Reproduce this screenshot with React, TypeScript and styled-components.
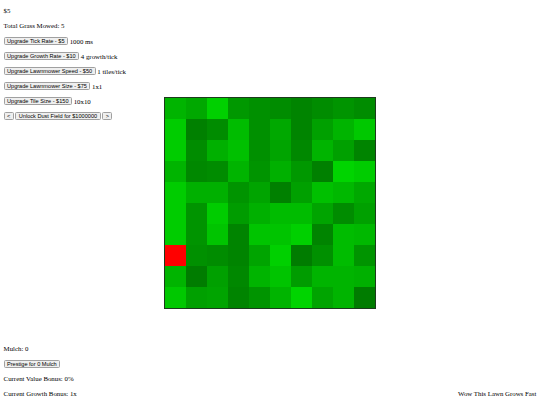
import styled, { createGlobalStyle } from "styled-components";

const GlobalStyle = createGlobalStyle`
    html, body {
        margin: 0;
        padding: 0;
        background: #fff;
    }
    body {
        font-family: "Liberation Serif", "Times New Roman", serif;
        font-size: 6.85px;
        color: #000;
    }
`;

// lawn tile colours, row by row (red = the mower)
const lawn: string[][] = [
    ["#00b400", "#00a800", "#00d000", "#009800", "#009000", "#008c00", "#008400", "#008c00", "#009400", "#008c00"],
    ["#00cc00", "#008000", "#008c00", "#00bc00", "#009000", "#00a800", "#008400", "#00a000", "#00b400", "#00c800"],
    ["#00cc00", "#008c00", "#00b000", "#00c000", "#009000", "#00a400", "#008800", "#00b400", "#00a000", "#008400"],
    ["#00b400", "#008800", "#008c00", "#00b400", "#009400", "#00b000", "#009800", "#008000", "#00d400", "#00cc00"],
    ["#00cc00", "#00b000", "#00b000", "#009400", "#00a400", "#008000", "#00a000", "#00c000", "#00b800", "#00a800"],
    ["#00cc00", "#009400", "#00cc00", "#009c00", "#00b000", "#00bc00", "#00bc00", "#00a400", "#008c00", "#00a000"],
    ["#00cc00", "#009400", "#00c400", "#008400", "#00c400", "#00c400", "#00d000", "#008400", "#00bc00", "#00b800"],
    ["#ff0000", "#009000", "#008c00", "#008400", "#00a400", "#00d000", "#007c00", "#009000", "#00bc00", "#009400"],
    ["#00b400", "#007c00", "#00a000", "#008800", "#00b400", "#00c400", "#009c00", "#00b400", "#00b400", "#00b000"],
    ["#00c800", "#00a000", "#00a400", "#008400", "#009400", "#00b400", "#00d400", "#00a400", "#00b400", "#007c00"],
];

const upgrades = [
    { label: "Upgrade Tick Rate - $5", value: "1000 ms" },
    { label: "Upgrade Growth Rate - $10", value: "4 growth/tick" },
    { label: "Upgrade Lawnmower Speed - $50", value: "1 tiles/tick" },
    { label: "Upgrade Lawnmower Size - $75", value: "1x1" },
    { label: "Upgrade Tile Size - $150", value: "10x10" },
];

export default function App() {
    return <>
        <GlobalStyle />
        <Page>
            <Controls>
                <Line>$5</Line>
                <Line>Total Grass Mowed: 5</Line>
                {upgrades.map(u => (
                    <Line key={u.label}>
                        <Button>{u.label}</Button> {u.value}
                    </Line>
                ))}
                <Line>
                    <Button>&lt;</Button> <Button>Unlock Dust Field for $1000000</Button> <Button>&gt;</Button>
                </Line>
            </Controls>
            <Lawn>
                {lawn.flat().map((c, i) => <Tile key={i} $color={c} />)}
            </Lawn>
            <Bottom>
                <div>
                    <Line>Mulch: 0</Line>
                    <Line><Button>Prestige for 0 Mulch</Button></Line>
                    <Line>Current Value Bonus: 0%</Line>
                    <Line>Current Growth Bonus: 1x</Line>
                </div>
                <Line>Wow This Lawn Grows Fast</Line>
            </Bottom>
        </Page>
    </>
};

const Page = styled.div`
    height: 100vh;
    box-sizing: border-box;
    padding: 0 3.6px;
    display: grid;
    grid-template-columns: minmax(0, 1fr) auto minmax(0, 1fr);
    grid-template-rows: minmax(0, 1fr) auto minmax(0, 1fr);
`;

const Controls = styled.div`
    grid-area: 1 / 1 / 2 / 2;
    align-self: start;
    padding-top: 0.5px;
    white-space: nowrap;
`;

const Line = styled.p`
    margin: 6.9px 0;
    line-height: 8px;
    height: 8px;
`;

const Button = styled.button`
    font-family: "Liberation Sans", Arial, sans-serif;
    font-size: 5.6px;
    line-height: 6px;
    padding: 0 2.4px;
    margin: 0;
    color: #000;
    background: #efefef;
    border: 1px solid #a0a0a0;
    border-radius: 1.5px;
    vertical-align: 0.5px;
`;

const Lawn = styled.div`
    grid-area: 2 / 2 / 3 / 3;
    display: grid;
    grid-template-columns: repeat(10, 21px);
    grid-template-rows: repeat(10, 21px);
    border: 1.5px solid #1d3a1d;
`;

const Tile = styled.div<{ $color: string }>`
    background: ${p => p.$color};
`;

const Bottom = styled.div`
    grid-area: 3 / 1 / 4 / 4;
    align-self: end;
    display: flex;
    justify-content: space-between;
    align-items: flex-end;
`;
